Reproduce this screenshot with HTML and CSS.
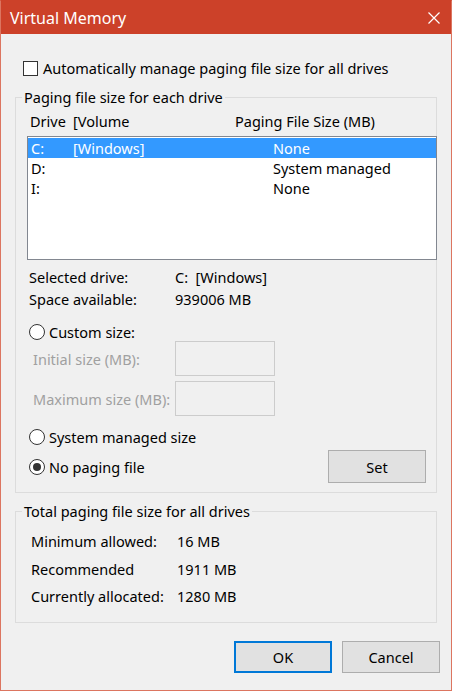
FILE: index.html
```html
<!DOCTYPE html>
<html lang="en">
<head>
<meta charset="utf-8">
<title>Virtual Memory</title>
<link rel="stylesheet" href="styles.css">
</head>
<body>
<div class="window">
  <div class="titlebar">
    <span class="title">Virtual Memory</span>
    <svg class="close" width="12" height="12" viewBox="0 0 12 12"><path d="M0.5 0.5 L11.5 11.5 M11.5 0.5 L0.5 11.5" stroke="#fff" stroke-width="1.2" fill="none"/></svg>
  </div>
  <div class="content">
    <div class="auto-row">
      <span class="checkbox"></span>
      <span>Automatically manage paging file size for all drives</span>
    </div>

    <fieldset class="group group-drives">
      <legend>Paging file size for each drive</legend>
      <div class="group-body drives-body">
        <div class="list-head">
          <span class="hc1">Drive</span>
          <span class="hc2">[Volume</span>
          <span>Paging File Size (MB)</span>
        </div>
        <div class="listbox">
          <div class="lrow selected"><span class="lc1">C:</span><span class="lc2">[Windows]</span><span>None</span></div>
          <div class="lrow"><span class="lc1">D:</span><span class="lc2"></span><span>System managed</span></div>
          <div class="lrow"><span class="lc1">I:</span><span class="lc2"></span><span>None</span></div>
        </div>
        <div class="info first"><span class="ilabel">Selected drive:</span><span>C:&nbsp; [Windows]</span></div>
        <div class="info"><span class="ilabel">Space available:</span><span>939006 MB</span></div>

        <div class="radio-row custom"><span class="radio"></span><span>Custom size:</span></div>
        <div class="size-row first-size"><span class="slabel">Initial size (MB):</span><span class="sinput"></span></div>
        <div class="size-row"><span class="slabel">Maximum size (MB):</span><span class="sinput"></span></div>
        <div class="radio-row sysman"><span class="radio"></span><span>System managed size</span></div>
        <div class="radio-row nopage">
          <span class="radio checked"></span><span>No paging file</span>
          <span class="spacer"></span>
          <span class="btn set">Set</span>
        </div>
      </div>
    </fieldset>

    <fieldset class="group group-total">
      <legend>Total paging file size for all drives</legend>
      <div class="group-body total-body">
        <div class="trow"><span class="tlabel">Minimum allowed:</span><span>16 MB</span></div>
        <div class="trow"><span class="tlabel">Recommended</span><span>1911 MB</span></div>
        <div class="trow"><span class="tlabel">Currently allocated:</span><span>1280 MB</span></div>
      </div>
    </fieldset>

    <div class="buttons">
      <span class="btn default">OK</span>
      <span class="btn">Cancel</span>
    </div>
  </div>
</div>
</body>
</html>
```
FILE: styles.css
```css
* { box-sizing: border-box; }
html, body { margin: 0; padding: 0; background: #f0f0f0; }
body {
  font-family: "Noto Sans", "Open Sans", sans-serif;
  font-size: 14.5px;
  color: #000;
}
.window {
  width: 452px;
  height: 691px;
  border: 1px solid #dc7560;
  border-top-color: #cc4129;
  background: #f0f0f0;
  display: flex;
  flex-direction: column;
}
.titlebar {
  height: 33px;
  background: #cc4129;
  color: #fff;
  display: flex;
  align-items: center;
  padding-left: 9px;
  padding-right: 11px;
  font-size: 16px;
}
.title { flex: 1; margin-top: 1px; }
.close { display: block; margin-top: 1px; }

.content { display: flex; flex-direction: column; }

.auto-row {
  display: flex;
  align-items: center;
  height: 20px;
  margin-top: 24px;
  margin-left: 22px;
  line-height: 20px;
}
.checkbox {
  width: 15px;
  height: 15px;
  border: 1px solid #333;
  background: #fff;
  margin-right: 5px;
}

.group {
  margin: 0 14px;
  padding: 0;
  border: 1px solid #dcdcdc;
  min-width: 0;
}
.group legend {
  margin-left: 6px;
  padding: 0 2px;
  line-height: 20px;
}
.group-body { display: flex; flex-direction: column; }
.group-drives { margin-top: 9px; }
.drives-body { padding: 4px 0 9px 13px; }

.list-head {
  display: flex;
  height: 20px;
  line-height: 20px;
  padding-left: 1px;
}
.hc1 { width: 43px; }
.hc2 { width: 162px; }

.listbox {
  margin-top: 5px;
  margin-left: -2px;
  margin-right: -1px;
  height: 124px;
  border: 1px solid #828790;
  background: #fff;
  padding-top: 1px;
}
.lrow {
  display: flex;
  height: 20px;
  line-height: 20px;
  padding-left: 3px;
}
.lrow.selected { background: #3399ff; color: #fff; }
.lc1 { width: 42px; }
.lc2 { width: 200px; }

.info { display: flex; height: 22px; line-height: 22px; }
.info.first { margin-top: 6px; }
.ilabel { width: 146px; }

.radio-row {
  display: flex;
  align-items: center;
  height: 20px;
  line-height: 20px;
}
.radio {
  width: 16px;
  height: 16px;
  border: 1px solid #333;
  border-radius: 50%;
  background: #fff;
  margin-right: 4px;
  display: flex;
  align-items: center;
  justify-content: center;
}
.radio.checked::after {
  content: "";
  width: 8px;
  height: 8px;
  border-radius: 50%;
  background: #333;
}
.custom { margin-top: 12px; }
.sysman { margin-top: 11px; }
.nopage { margin-top: 3px; height: 33px; padding-right: 10px; }
.spacer { flex: 1; }

.size-row {
  display: flex;
  align-items: center;
  height: 35px;
  color: #a0a0a0;
  margin-top: 5px;
}
.size-row.first-size { margin-top: -1px; }
.slabel { width: 146px; padding-left: 4px; }
.sinput {
  width: 100px;
  height: 35px;
  border: 1px solid #cccccc;
  background: #f0f0f0;
}

.btn {
  display: flex;
  align-items: center;
  justify-content: center;
  width: 98px;
  height: 32px;
  background: #e1e1e1;
  border: 1px solid #adadad;
}
.btn.set { height: 33px; }
.btn.default { border: 2px solid #0078d7; }

.group-total { margin-top: 8px; }
.total-body { padding: 6.5px 0 12px 15px; }
.trow { display: flex; align-items: center; height: 27.5px; }
.tlabel { width: 146px; }

.buttons {
  display: flex;
  justify-content: flex-end;
  gap: 10px;
  margin-top: 18px;
  padding-right: 11px;
}
```
